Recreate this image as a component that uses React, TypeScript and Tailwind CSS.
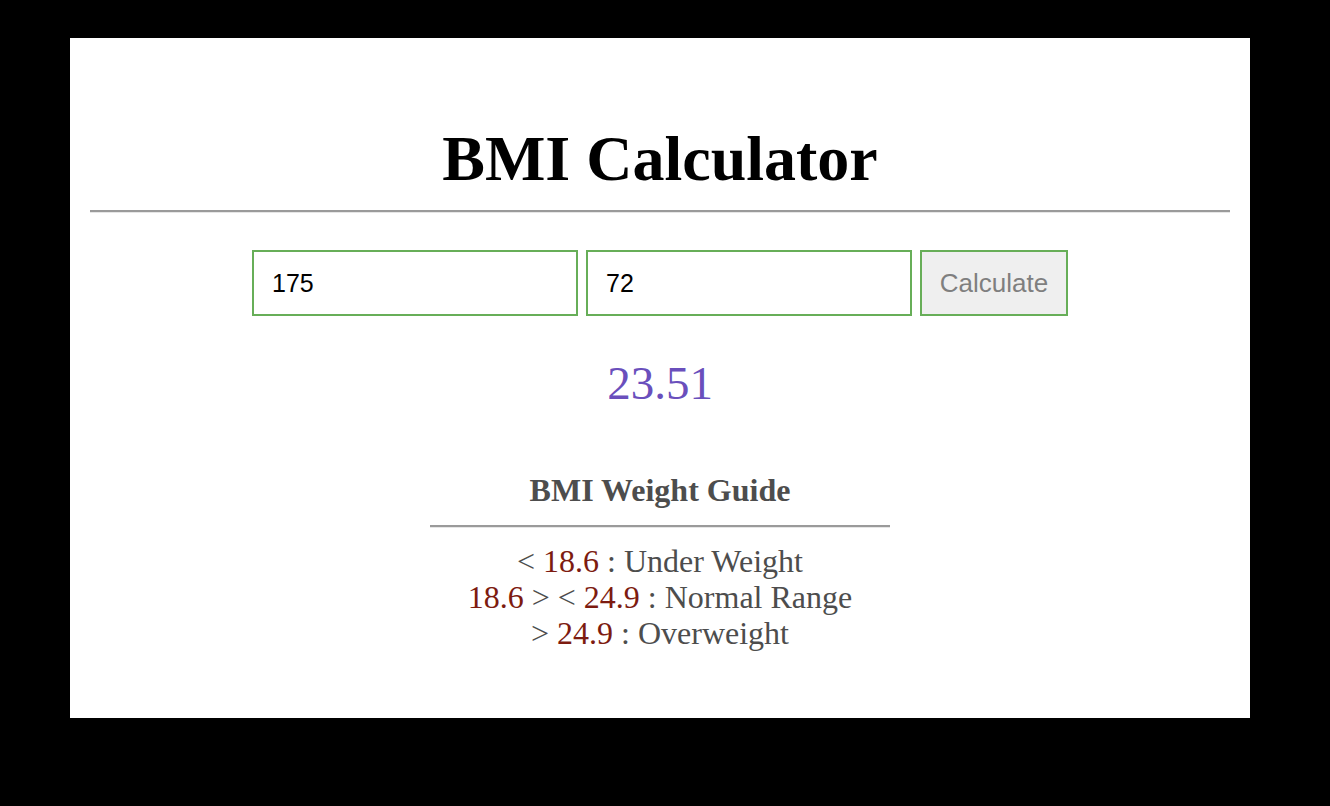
import { useState } from "react";

const serif = { fontFamily: '"Liberation Serif", "Times New Roman", serif' };

const Guide: React.FC = () => (
  <div className="mx-auto mt-[62px] w-[460px] text-center text-[#4d4d4d]" style={serif}>
    <h3 className="text-[32px] leading-[36px] font-bold">BMI Weight Guide</h3>
    {/* inset hr */}
    <div className="mt-[17px] border-t-2 border-[#9a9a9a] border-b border-b-[#e6e6e6]" />
    <div className="mt-[15px] text-[32px] leading-[36px]">
      <div>
        &lt; <span className="text-[#7d1b10]">18.6</span> : Under Weight
      </div>
      <div>
        <span className="text-[#7d1b10]">18.6</span> &gt; &lt; <span className="text-[#7d1b10]">24.9</span> : Normal Range
      </div>
      <div>
        &gt; <span className="text-[#7d1b10]">24.9</span> : Overweight
      </div>
    </div>
  </div>
);

export default function App() {
  const [height, setHeight] = useState("175");
  const [weight, setWeight] = useState("72");
  const [bmi, setBmi] = useState("23.51");

  const calc = () => {
    const h = parseFloat(height) / 100;
    const w = parseFloat(weight);
    if (h > 0 && w > 0) setBmi((w / (h * h)).toFixed(2));
  };

  return (
    <div className="min-h-screen bg-black pt-[38px] pl-[70px]">
      <div className="w-[1180px] h-[680px] bg-white px-5 pt-[84px]">
        <h1 className="text-center text-[64px] leading-[74px] font-bold text-black" style={serif}>
          BMI Calculator
        </h1>
        <div className="mt-[14px] border-t-2 border-[#9a9a9a] border-b border-b-[#e6e6e6]" />

        <div className="mt-[37px] flex justify-center gap-2" style={{ fontFamily: '"Liberation Sans", Arial, sans-serif' }}>
          <input
            value={height}
            onChange={(e) => setHeight(e.target.value)}
            className="w-[326px] h-[66px] border-2 border-[#67ae58] px-[18px] text-[25px] text-black outline-none"
          />
          <input
            value={weight}
            onChange={(e) => setWeight(e.target.value)}
            className="w-[326px] h-[66px] border-2 border-[#67ae58] px-[18px] text-[25px] text-black outline-none"
          />
          <button
            onClick={calc}
            className="w-[148px] h-[66px] border-2 border-[#67ae58] bg-[#efefef] text-[26px] text-[#7f7f7f]"
          >
            Calculate
          </button>
        </div>

        <div className="mt-[40px] text-center text-[47px] leading-[54px] text-[#6a4fbc]" style={serif}>
          {bmi}
        </div>

        <Guide />
      </div>
    </div>
  );
}
